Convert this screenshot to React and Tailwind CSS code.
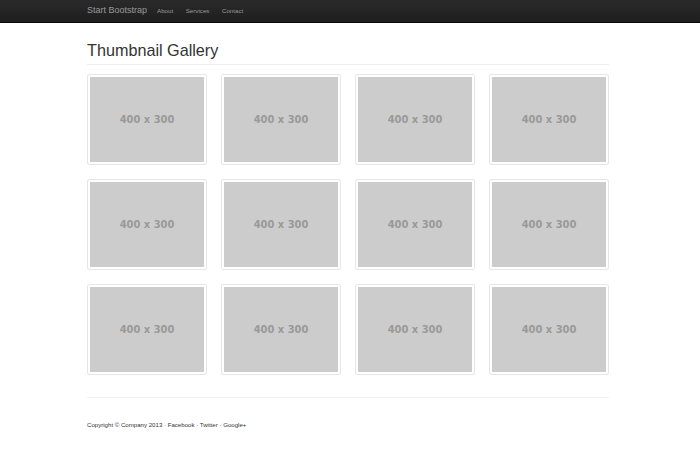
export default function App() {
  const thumbs = Array.from({ length: 12 });
  return (
    <div className="min-h-[450px] bg-white font-['Liberation_Sans',Arial,sans-serif] text-[#333]">
      <nav className="h-[23px] border-b border-[#080808] bg-gradient-to-b from-[#2a2a2a] to-[#1e1e1e]">
        <div className="ml-[87px] flex h-full items-center">
          <a className="text-[9px] text-[#999]">Start Bootstrap</a>
          <div className="ml-[10px] flex gap-[12.5px] text-[6.2px] text-[#999]">
            <a>About</a>
            <a>Services</a>
            <a>Contact</a>
          </div>
        </div>
      </nav>

      <div className="ml-[87px] w-[522px]">
        <div className="mt-[16px] border-b border-[#eee] pb-[3px]">
          <h1 className="text-[16.2px] leading-[22px] text-[#333]">Thumbnail Gallery</h1>
        </div>

        <div className="mt-[9px] grid grid-cols-4 gap-x-[14px] gap-y-[14px]">
          {thumbs.map((_, i) => (
            <div key={i} className="h-[91px] rounded-[2px] border border-[#e6e6e6] bg-white p-[2px]">
              <div className="flex h-full items-center justify-center bg-[#cccccc] pt-[2px] font-['DejaVu_Sans_Condensed','Roboto',sans-serif] text-[11px] font-bold text-[#999]">
                400 x 300
              </div>
            </div>
          ))}
        </div>

        <footer className="mt-[22px] border-t border-[#f2f2f2] pt-[22px] text-[6.1px] text-[#333]">
          Copyright © Company 2013 · <a>Facebook</a> · <a>Twitter</a> · <a>Google+</a>
        </footer>
      </div>
    </div>
  );
}
